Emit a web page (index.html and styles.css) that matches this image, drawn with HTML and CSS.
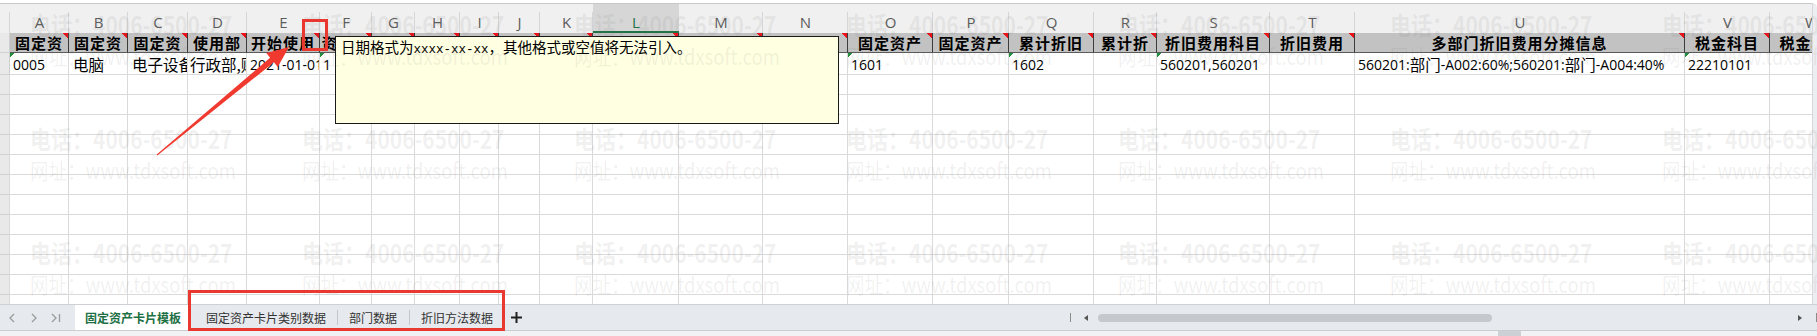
FILE: index.html
```html
<!DOCTYPE html>
<html lang="zh-CN">
<head>
  <meta charset="UTF-8" />
  <title>固定资产卡片模板</title>
  <link rel="stylesheet" href="styles.css">
</head>
<body>
<div class="app">
  <div class="frame">
    <div class="sheet">
      <!-- column letters -->
      <div class="col-head"></div>
      <div class="col-head">A</div>
      <div class="col-head">B</div>
      <div class="col-head">C</div>
      <div class="col-head">D</div>
      <div class="col-head">E</div>
      <div class="col-head">F</div>
      <div class="col-head">G</div>
      <div class="col-head">H</div>
      <div class="col-head">I</div>
      <div class="col-head">J</div>
      <div class="col-head">K</div>
      <div class="col-head on">L</div>
      <div class="col-head">M</div>
      <div class="col-head">N</div>
      <div class="col-head">O</div>
      <div class="col-head">P</div>
      <div class="col-head">Q</div>
      <div class="col-head">R</div>
      <div class="col-head">S</div>
      <div class="col-head">T</div>
      <div class="col-head">U</div>
      <div class="col-head">V</div>
      <div class="col-head">W</div>

      <!-- row 1: field titles -->
      <div class="rh"></div>
      <div class="th">固定资</div>
      <div class="th">固定资</div>
      <div class="th">固定资</div>
      <div class="th">使用部</div>
      <div class="th">开始使用</div>
      <div class="th">资产类</div>
      <div class="th"></div>
      <div class="th"></div>
      <div class="th"></div>
      <div class="th"></div>
      <div class="th"></div>
      <div class="th"></div>
      <div class="th"></div>
      <div class="th"></div>
      <div class="th">固定资产</div>
      <div class="th">固定资产</div>
      <div class="th">累计折旧</div>
      <div class="th">累计折</div>
      <div class="th">折旧费用科目</div>
      <div class="th">折旧费用</div>
      <div class="th">多部门折旧费用分摊信息</div>
      <div class="th">税金科目</div>
      <div class="th">税金科目</div>

      <!-- row 2: sample card -->
      <div class="rh"></div>
      <div class="td flag">0005</div>
      <div class="td wide"><span class="zh">电脑</span></div>
      <div class="td wide"><span class="zh">电子设备</span></div>
      <div class="td tight"><span class="zh">行政部,财务部</span></div>
      <div class="td">2021-01-01</div>
      <div class="td flag">1</div>
      <div class="td"></div>
      <div class="td"></div>
      <div class="td"></div>
      <div class="td"></div>
      <div class="td"></div>
      <div class="td"></div>
      <div class="td"></div>
      <div class="td"></div>
      <div class="td flag">1601</div>
      <div class="td"></div>
      <div class="td flag">1602</div>
      <div class="td"></div>
      <div class="td flag">560201,560201</div>
      <div class="td"></div>
      <div class="td">560201:<span class="zh">部门</span>-A002:60%;560201:<span class="zh">部门</span>-A004:40%</div>
      <div class="td flag">22210101</div>
      <div class="td"></div>

      <!-- empty rows -->
      <div class="rh fill"></div>
      <div class="fill"></div>
      <div class="fill"></div>
      <div class="fill"></div>
      <div class="fill"></div>
      <div class="fill"></div>
      <div class="fill"></div>
      <div class="fill"></div>
      <div class="fill"></div>
      <div class="fill"></div>
      <div class="fill"></div>
      <div class="fill"></div>
      <div class="fill"></div>
      <div class="fill"></div>
      <div class="fill"></div>
      <div class="fill"></div>
      <div class="fill"></div>
      <div class="fill"></div>
      <div class="fill"></div>
      <div class="fill"></div>
      <div class="fill"></div>
      <div class="fill"></div>
      <div class="fill"></div>
      <div class="fill"></div>
    </div>
    <div class="vscroll"></div>
  </div>

  <div class="tabbar">
    <div class="sheets">
      <div class="nav">
        <span><svg width="6" height="10" viewBox="0 0 6 10"><path d="M5 1 1 5l4 4" fill="none" stroke="#9b9b9b" stroke-width="1.3"/></svg></span>
        <span><svg width="6" height="10" viewBox="0 0 6 10"><path d="M1 1l4 4-4 4" fill="none" stroke="#9b9b9b" stroke-width="1.3"/></svg></span>
        <span><svg width="10" height="10" viewBox="0 0 10 10"><path d="M1 1l4 4-4 4M8.5 1v8" fill="none" stroke="#9b9b9b" stroke-width="1.3"/></svg></span>
      </div>
      <div class="tab active">固定资产卡片模板</div>
      <div class="tab first">固定资产卡片类别数据</div>
      <div class="tab">部门数据</div>
      <div class="tab">折旧方法数据</div>
      <div class="add"><svg width="11" height="11" viewBox="0 0 11 11"><path d="M5.5 0v11M0 5.5h11" stroke="#222" stroke-width="2"/></svg></div>
    </div>
    <div class="hscroll">
      <span class="bar"></span>
      <span class="tri-l"></span>
      <span class="thumb"></span>
      <span class="tri-r"></span>
      <span class="bar end"></span>
    </div>
  </div>
  <div class="status"><span class="knob"></span></div>

  <!-- cell comment on E1 -->
  <div class="comment">日期格式为<span class="mono">xxxx-xx-xx</span>，其他格式或空值将无法引入。</div>

  <div class="watermark">
    <div class="wm"><b>电话：4006-6500-27</b><span>网址：www.tdxsoft.com</span></div>
    <div class="wm"><b>电话：4006-6500-27</b><span>网址：www.tdxsoft.com</span></div>
    <div class="wm"><b>电话：4006-6500-27</b><span>网址：www.tdxsoft.com</span></div>
    <div class="wm"><b>电话：4006-6500-27</b><span>网址：www.tdxsoft.com</span></div>
    <div class="wm"><b>电话：4006-6500-27</b><span>网址：www.tdxsoft.com</span></div>
    <div class="wm"><b>电话：4006-6500-27</b><span>网址：www.tdxsoft.com</span></div>
    <div class="wm"><b>电话：4006-6500-27</b><span>网址：www.tdxsoft.com</span></div>
    <div class="wm"><b>电话：4006-6500-27</b><span>网址：www.tdxsoft.com</span></div>
    <div class="wm"><b>电话：4006-6500-27</b><span>网址：www.tdxsoft.com</span></div>
    <div class="wm"><b>电话：4006-6500-27</b><span>网址：www.tdxsoft.com</span></div>
    <div class="wm"><b>电话：4006-6500-27</b><span>网址：www.tdxsoft.com</span></div>
    <div class="wm"><b>电话：4006-6500-27</b><span>网址：www.tdxsoft.com</span></div>
    <div class="wm"><b>电话：4006-6500-27</b><span>网址：www.tdxsoft.com</span></div>
    <div class="wm"><b>电话：4006-6500-27</b><span>网址：www.tdxsoft.com</span></div>
    <div class="wm"><b>电话：4006-6500-27</b><span>网址：www.tdxsoft.com</span></div>
    <div class="wm"><b>电话：4006-6500-27</b><span>网址：www.tdxsoft.com</span></div>
    <div class="wm"><b>电话：4006-6500-27</b><span>网址：www.tdxsoft.com</span></div>
    <div class="wm"><b>电话：4006-6500-27</b><span>网址：www.tdxsoft.com</span></div>
    <div class="wm"><b>电话：4006-6500-27</b><span>网址：www.tdxsoft.com</span></div>
    <div class="wm"><b>电话：4006-6500-27</b><span>网址：www.tdxsoft.com</span></div>
    <div class="wm"><b>电话：4006-6500-27</b><span>网址：www.tdxsoft.com</span></div>
  </div>

  <!-- red markup drawn over the screenshot -->
  <svg class="marks" width="1817" height="336" viewBox="0 0 1817 336">
    <rect x="303.5" y="20.5" width="23" height="29" fill="none" stroke="#e8382f" stroke-width="3"/>
    <rect x="189.5" y="291.5" width="314" height="38" fill="none" stroke="#e8382f" stroke-width="3"/>
    <polygon points="157.3,155.4 273.9,62.3 277.7,66.9 289,47 266.3,53.1 270.1,57.7 156.7,154.6" fill="#f03a30"/>
  </svg>
</div>
</body>
</html>
```

FILE: styles.css
```css
* {
  box-sizing: border-box;
}
body {
  margin: 0;
  background: #fff;
  font-family: "Open Sans", "Noto Sans CJK SC", sans-serif;
  color: #000;
}
.app {
  position: relative;
  width: 1817px;
  height: 336px;
  overflow: hidden;
}

/* worksheet */
.frame {
  display: flex;
  height: 301px;
  margin-top: 3px;
  border-top: 1px solid #c8c8c8;
  border-top-right-radius: 6px;
  overflow: hidden;
}
.sheet {
  flex: none;
  width: 1812px;
  overflow: hidden;
  display: grid;
  grid-template-columns: 10px 59px 59px 60px 59px 73px 52px 43px 45px 39px 41px 53px 86px 84px 85px 85px 76px 85px 63px 113px 85px 330px 85px 84px;
  grid-template-rows: 29px 20px 22px 229px;
}
.vscroll {
  flex: 1;
  background: #eceef1;
  border-left: 1px solid #d6d8dc;
}
.col-head {
  padding-top: 8px;
  line-height: 20px;
  text-align: center;
  font-size: 15px;
  color: #5c5c5c;
  background: linear-gradient(#d6d6d6, #d6d6d6) right bottom / 1px 21px no-repeat, #f0f0f0;
}
.col-head.on {
  background-color: #d6d6d6;
  color: #217346;
  box-shadow: inset 0 -2px #217346;
}
.rh {
  background: #e9e9e9;
  border-right: 1px solid #cfcfcf;
  border-bottom: 1px solid #d2d2d2;
}
.th {
  display: flex;
  align-items: center;
  justify-content: center;
  white-space: nowrap;
  overflow: hidden;
  font-family: "Noto Sans CJK SC", sans-serif;
  font-size: 15px;
  font-weight: bold;
  letter-spacing: 1px;
  background: linear-gradient(225deg, #e8141a 0 4px, transparent 4px) right top / 6px 6px no-repeat, #c2c2c2;
  border-right: 1px solid #3c3c3c;
  border-bottom: 1px solid #5a5a5a;
}
.td {
  display: flex;
  align-items: center;
  padding: 1px 3px 0;
  white-space: nowrap;
  overflow: hidden;
  font-size: 14px;
  border-right: 1px solid #dadada;
  border-bottom: 1px solid #dadada;
}
.td.wide {
  padding-left: 4px;
}
.td.tight {
  padding-left: 2px;
}
.td .zh {
  font-family: "Noto Sans CJK SC", sans-serif;
  font-size: 15.5px;
  vertical-align: -2px;
}
.td.flag {
  background: linear-gradient(135deg, #1f8f3b 0 3px, transparent 3px) left top / 5px 5px no-repeat;
}
.fill {
  border-right: 1px solid #dadada;
  background: repeating-linear-gradient(transparent 0 19px, #dadada 19px 20px);
}
.rh.fill {
  border-bottom: 0;
  background: repeating-linear-gradient(transparent 0 19px, #d2d2d2 19px 20px), #e9e9e9;
}

/* sheet tabs + horizontal scroll */
.tabbar {
  display: flex;
  height: 26px;
  background: #e6e9ed;
  border-top: 1px solid #cdd1d6;
  font-family: "Noto Sans CJK SC", sans-serif;
  font-size: 12px;
  color: #333;
}
.sheets {
  flex: none;
  width: 1062px;
  display: flex;
}
.nav {
  width: 75px;
  display: flex;
  align-items: center;
  padding-left: 1px;
}
.nav span {
  width: 22px;
  display: flex;
  justify-content: center;
}
.tab {
  display: flex;
  align-items: center;
  padding: 0 12px;
  white-space: nowrap;
  background: linear-gradient(#c3c7cc, #c3c7cc) left center / 1px 15px no-repeat;
}
.tab.active {
  width: 116px;
  justify-content: center;
  padding: 0;
  background: #fff;
  color: #1d7044;
  font-weight: bold;
}
.tab.first {
  padding-left: 15px;
  padding-right: 11px;
  background: none;
}
.add {
  width: 22px;
  display: flex;
  align-items: center;
  justify-content: center;
}
.hscroll {
  flex: 1;
  display: flex;
  align-items: center;
}
.bar {
  width: 1px;
  height: 9px;
  margin-left: 8px;
  background: #8c8c8c;
}
.bar.end {
  margin-left: 14px;
}
.tri-l {
  margin-left: 13px;
  border-style: solid;
  border-width: 3px 4px 3px 0;
  border-color: transparent #555 transparent transparent;
}
.thumb {
  width: 394px;
  height: 8px;
  margin-left: 10px;
  border-radius: 4px;
  background: #c5c9ce;
}
.tri-r {
  margin-left: auto;
  border-style: solid;
  border-width: 3px 0 3px 4px;
  border-color: transparent transparent transparent #555;
}
.status {
  height: 6px;
  background: #f1f2f4;
  border-top: 1px solid #c9ccd1;
}
.knob {
  display: block;
  width: 23px;
  height: 5px;
  margin-left: 1498px;
  background: #cdd0d4;
}

/* comment popup */
.comment {
  position: absolute;
  left: 335px;
  top: 36px;
  width: 504px;
  height: 88px;
  padding: 0 5px;
  background: #ffffe1;
  border: 1px solid #1a1a1a;
  font-family: "Noto Sans CJK SC", sans-serif;
  font-size: 14.5px;
  line-height: 20px;
}
.mono {
  font-family: "Liberation Mono", monospace;
  font-size: 12.5px;
}

/* watermark layer */
.watermark {
  position: absolute;
  inset: 0;
  display: grid;
  grid-template-columns: repeat(7, 272px);
  grid-auto-rows: 114px;
  padding: 9px 0 0 30px;
  overflow: hidden;
  pointer-events: none;
  color: rgba(110, 110, 110, 0.1);
  font-family: "Noto Sans CJK SC", sans-serif;
}
.wm {
  white-space: nowrap;
  transform: scaleX(0.84);
  transform-origin: left top;
}
.wm b {
  display: block;
  font-size: 25px;
  line-height: 30px;
}
.wm span {
  display: block;
  margin-top: 1px;
  font-size: 22px;
  line-height: 30px;
}
.marks {
  position: absolute;
  left: 0;
  top: 0;
  pointer-events: none;
}
```
